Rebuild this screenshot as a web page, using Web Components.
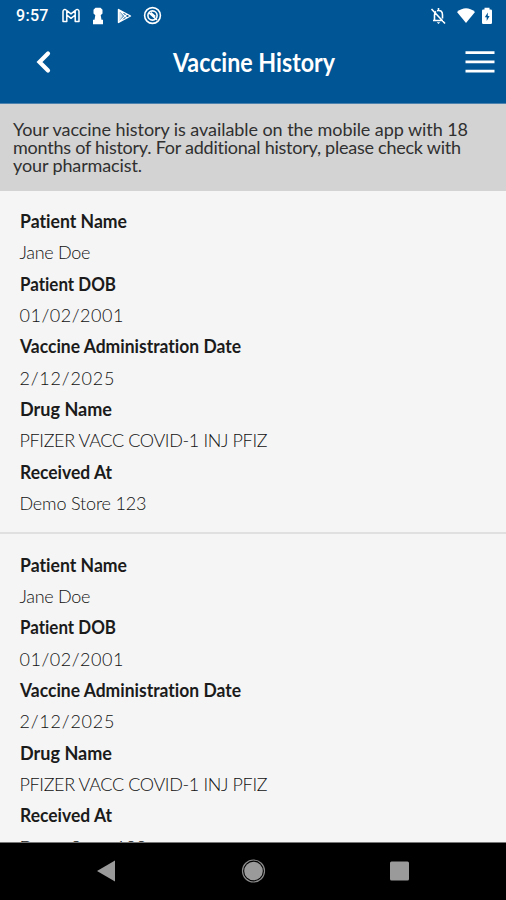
<!DOCTYPE html>
<html lang="en">
<head>
<meta charset="utf-8">
<title>Vaccine History</title>
<style>
html, body {margin:0;height:100%;}
body {font-family:Lato, "Open Sans", sans-serif;font-variant-ligatures:none;color:#222;background-color:#f5f5f5;overflow:hidden;}
</style>
</head>
<body>
<vx-phone>
  <vx-statusbar slot="top" time="9:57"></vx-statusbar>
  <vx-header slot="top"><fit-text width="162" squeeze>Vaccine History</fit-text></vx-header>
  <vx-notice slot="top">
    <fit-text width="455">Your vaccine history is available on the mobile app with 18</fit-text>
    <fit-text width="448">months of history. For additional history, please check with</fit-text>
    <fit-text width="129">your pharmacist.</fit-text>
  </vx-notice>
  <vx-record></vx-record>
  <vx-record></vx-record>
  <vx-navbar slot="bottom"></vx-navbar>
</vx-phone>

<script>
(function() {

function attach(elem, html) {
  const template = document.createElement('template');
  template.innerHTML = html;
  const root = elem.attachShadow({mode: 'open'});
  root.appendChild(template.content.cloneNode(true));
  return root;
}

// one line of text that fills the given width: tracked, or condensed with "squeeze"
class FitText extends HTMLElement {
  constructor() {
    super();
    attach(this, `<style>
      :host {display:block;white-space:nowrap;}
      span {display:inline-block;transform-origin:0 50%;}
      </style><span><slot></slot></span>`);
  }
  connectedCallback() {
    const span = this.shadowRoot.querySelector('span');
    const natural = span.getBoundingClientRect().width;
    const width = Number(this.getAttribute('width'));
    if (this.hasAttribute('squeeze')) {
      this.style.width = width + 'px';
      span.style.transform = 'scaleX(' + width / natural + ')';
      return;
    }
    const spacing = (width - natural) / (this.textContent.length - 1);
    span.style.letterSpacing = spacing + 'px';
    span.style.marginRight = -spacing + 'px';
  }
}

class VxPhone extends HTMLElement {
  constructor() {
    super();
    attach(this, `<style>
      :host {display:flex;flex-direction:column;height:100vh;overflow:hidden;}
      main {flex:1;min-height:0;overflow:hidden;background-color:#f5f5f5;}
      </style>
      <slot name="top"></slot>
      <main><slot></slot></main>
      <slot name="bottom"></slot>`);
  }
}

class VxStatusBar extends HTMLElement {
  constructor() {
    super();
    const root = attach(this, `<style>
      :host {display:flex;align-items:center;height:31px;padding:0 13px 0 16px;background-color:#005595;color:#fff;box-sizing:border-box;flex:none;}
      .time {font:500 16px/31px Roboto, sans-serif;width:46px;letter-spacing:.3px;}
      svg {display:block;flex:none;}
      .left {display:flex;align-items:center;}
      .right {margin-left:auto;display:flex;align-items:center;}
      </style>
      <span class="time"></span>
      <div class="left">
        <svg width="18" height="15" viewBox="0 0 18 15" fill="none" stroke="#fff" stroke-width="1.5" stroke-linejoin="round"><path d="M1 13.500V3.500C1 1.500 3 1 4.200 2L9 5.800 13.800 2C15 1 17 1.500 17 3.500V13.500H13.200V7L9 10.300 4.800 7V13.500zM4.800 7V2.800M13.200 7V2.800"/></svg>
        <svg style="margin-left:12px" width="12" height="18" viewBox="0 0 12 18" fill="#fff"><path d="M3.500.8h5l2 2v3.700L8.700 8.300l.8 4.400H11v4.500H1v-4.500h1.500l.8-4.400L1.500 6.500V2.800z"/></svg>
        <svg style="margin-left:13px" width="15" height="16" viewBox="0 0 15 16" fill="none" stroke="#fff" stroke-width="1.400" stroke-linejoin="round"><path d="M1.500 1.500L13.500 8 1.500 14.500zM1.500 1.500L10 10M1.500 14.500L10 6"/><path fill="#fff" stroke="none" d="M1 1.500l5 6.500-5 6.500z" opacity=".85"/></svg>
        <svg style="margin-left:11px" width="19" height="19" viewBox="0 0 19 19" fill="none" stroke="#fff" stroke-width="1.600"><circle cx="9.500" cy="9.500" r="7.900"/><circle cx="9.500" cy="9.500" r="4.600"/><path d="M5.800 6.600L14 14M7.800 6.500l4.500 4"/></svg>
      </div>
      <div class="right">
        <svg width="17" height="18" viewBox="0 0 17 18" fill="none" stroke="#fff" stroke-width="1.600"><path d="M1.500 2L15 16.500M3 13.500h10M4.500 13V8Q4.500 5.500 6 4.300M7 3.700Q12.500 2.500 12.500 8v3.500M8.500 1v2"/><path d="M6.800 15.200h3.400L8.500 17z" fill="#fff" stroke="none"/></svg>
        <svg style="margin-left:9px" width="20" height="17" viewBox="0 0 20 17" fill="#fff"><path d="M10 16L1 5Q10-2.500 19 5z"/></svg>
        <svg style="margin-left:5px" width="12" height="18" viewBox="0 0 12 18"><path d="M3.500 2.500V.8h5v1.700h1.300q1.200 0 1.200 1.200v12.100q0 1.200-1.200 1.200H2.200Q1 17 1 15.800V3.700Q1 2.500 2.200 2.500z" fill="#fff"/><path d="M6.800 5.500L3.800 10.300h1.900v3.700l2.900-5h-1.800z" fill="#005595"/></svg>
      </div>`);
    root.querySelector('.time').textContent = this.getAttribute('time');
  }
}

class VxHeader extends HTMLElement {
  constructor() {
    super();
    attach(this, `<style>
      :host {display:grid;grid-template-columns:1fr auto 1fr;align-items:center;height:73px;padding:0 11px 11px 13px;background-color:#005595;color:#fff;box-sizing:border-box;flex:none;border-bottom:1px solid #4b82ae;}
      .title {font-weight:700;font-size:26px;line-height:32px;}
      .back {margin-left:22px;}
      .menu {justify-self:end;}
      svg {display:block;}
      </style>
      <svg class="back" width="17" height="24" viewBox="0 0 17 24" fill="none" stroke="#fff" stroke-width="4.200" stroke-linecap="round"><path d="M13 3.500L4.500 12l8.500 8.500"/></svg>
      <div class="title"><slot></slot></div>
      <svg class="menu" width="30" height="24" viewBox="0 0 30 24" fill="#fff"><path d="M.5 1.300h29v2.800H.5zM.5 10.500h29v2.800H.5zM.5 19.700h29v2.800H.5z"/></svg>`);
  }
}

class VxNotice extends HTMLElement {
  constructor() {
    super();
    attach(this, `<style>
      :host {display:block;height:86.500px;padding:15.500px 13px 0;background-color:#d3d3d3;color:#303030;font-size:18px;line-height:18.300px;box-sizing:border-box;flex:none;}
      </style><slot></slot>`);
  }
}

class VxRecord extends HTMLElement {
  constructor() {
    super();
    attach(this, `<style>
      :host {display:block;height:343.700px;padding:15.700px 19.500px 0;box-sizing:border-box;border-bottom:2px solid #e0e0e0;}
      dl, dt, dd {margin:0;}
      dt, dd {height:31.300px;line-height:31.300px;font-size:18px;}
      dt {font-weight:700;color:#1b1b1b;}
      dd {font-weight:300;color:#111;}
      </style>
      <dl>
        <dt><fit-text width="107" squeeze>Patient Name</fit-text></dt>
        <dd><fit-text width="71">Jane Doe</fit-text></dd>
        <dt><fit-text width="96" squeeze>Patient DOB</fit-text></dt>
        <dd><fit-text width="104">01/02/2001</fit-text></dd>
        <dt><fit-text width="221" squeeze>Vaccine Administration Date</fit-text></dt>
        <dd><fit-text width="95">2/12/2025</fit-text></dd>
        <dt><fit-text width="92" squeeze>Drug Name</fit-text></dt>
        <dd><fit-text width="248">PFIZER VACC COVID-1 INJ PFIZ</fit-text></dd>
        <dt><fit-text width="92" squeeze>Received At</fit-text></dt>
        <dd><fit-text width="127">Demo Store 123</fit-text></dd>
      </dl>`);
  }
}

class VxNavBar extends HTMLElement {
  constructor() {
    super();
    attach(this, `<style>
      :host {display:flex;align-items:center;justify-content:space-between;height:58px;padding:0 96px 2px 95px;background-color:#000;box-sizing:border-box;flex:none;border-top:1px solid #777;}
      svg {display:block;}
      </style>
      <svg width="22" height="24" viewBox="0 0 22 24" fill="#9a9a9a"><path d="M20 1.500v21L2 12z"/></svg>
      <svg width="26" height="26" viewBox="0 0 26 26"><circle cx="13.500" cy="13" r="9.300" fill="#9a9a9a"/><circle cx="13.500" cy="13" r="11" fill="none" stroke="#8a8a8a" stroke-width="1.200"/></svg>
      <svg width="22" height="22" viewBox="0 0 22 22"><rect x="2" y="1.500" width="19" height="19" rx="1.500" fill="#9a9a9a"/></svg>`);
  }
}

window.customElements.define('vx-phone', VxPhone);
window.customElements.define('vx-statusbar', VxStatusBar);
window.customElements.define('vx-header', VxHeader);
window.customElements.define('vx-notice', VxNotice);
window.customElements.define('vx-record', VxRecord);
window.customElements.define('vx-navbar', VxNavBar);
// last, so the fonts of the parents are in place when it measures
window.customElements.define('fit-text', FitText);
})();
</script>
</body>
</html>
